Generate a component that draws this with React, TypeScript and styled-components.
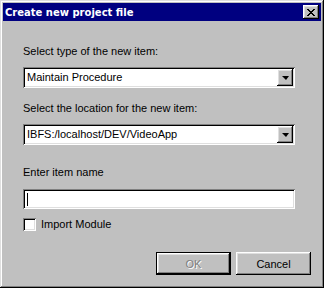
import styled, { createGlobalStyle } from "styled-components";

const GlobalStyle = createGlobalStyle`
  html, body {
    margin: 0;
    padding: 0;
    background: #c0c0c0;
  }
  body {
    font-family: "Liberation Sans", Arial, sans-serif;
    font-size: 11px;
  }
`;

const raised = `
  box-shadow: inset -1px -1px #000, inset 1px 1px #fff,
    inset -2px -2px #808080, inset 2px 2px #dfdfdf;
`;

const sunken = `
  box-shadow: inset 1px 1px #808080, inset -1px -1px #fff,
    inset 2px 2px #000, inset -2px -2px #dfdfdf;
`;

const Window = styled.div`
  box-sizing: border-box;
  width: 324px;
  height: 288px;
  padding: 3px;
  background: #c0c0c0;
  display: flex;
  flex-direction: column;
  box-shadow: inset -1px -1px #000, inset 1px 1px #dfdfdf,
    inset -2px -2px #808080, inset 2px 2px #fff;
`;

const TitleBar = styled.div`
  height: 18px;
  background: #000080;
  display: flex;
  align-items: center;
  justify-content: space-between;
  padding: 0 2px 0 2px;
`;

const Title = styled.span`
  color: #fff;
  font-weight: bold;
  font-size: 10px;
  font-family: "DejaVu Sans", Verdana, sans-serif;
`;

const CloseButton = styled.button`
  width: 16px;
  height: 14px;
  padding: 0;
  border: none;
  background: #c0c0c0;
  display: flex;
  align-items: center;
  justify-content: center;
  ${raised}
`;

const Body = styled.div`
  display: flex;
  flex-direction: column;
  padding: 24px 26px 0 20px;
  flex: 1;
`;

const Label = styled.div<{ $gap: number }>`
  line-height: 13px;
  height: 13px;
  color: #000;
  margin-top: ${({ $gap }) => $gap}px;
`;

const Combo = styled.div<{ $gap: number }>`
  box-sizing: border-box;
  height: 21px;
  margin-top: ${({ $gap }) => $gap}px;
  background: #fff;
  display: flex;
  align-items: center;
  padding: 2px;
  ${sunken}
`;

const ComboText = styled.span`
  flex: 1;
  padding-left: 2px;
  line-height: 13px;
`;

const ComboButton = styled.div`
  width: 16px;
  height: 17px;
  background: #c0c0c0;
  display: flex;
  align-items: center;
  justify-content: center;
  ${raised}
`;

const Arrow = styled.div`
  width: 0;
  height: 0;
  border-left: 4px solid transparent;
  border-right: 3px solid transparent;
  border-top: 4px solid #000;
  margin-top: 1px;
`;

const TextField = styled.div`
  box-sizing: border-box;
  height: 20px;
  margin-top: 10px;
  background: #fff;
  display: flex;
  align-items: center;
  padding: 3px 4px;
  ${sunken}
`;

const Caret = styled.div`
  width: 1px;
  height: 13px;
  background: #000;
`;

const CheckRow = styled.label`
  display: flex;
  align-items: center;
  margin-top: 9px;
  gap: 5px;
  line-height: 13px;
`;

const CheckBox = styled.span`
  box-sizing: border-box;
  width: 13px;
  height: 13px;
  background: #fff;
  ${sunken}
`;

const ButtonRow = styled.div`
  display: flex;
  justify-content: flex-end;
  gap: 5px;
  margin-top: 21px;
  margin-right: -16px;
`;

const Button = styled.button<{ $default?: boolean }>`
  box-sizing: border-box;
  width: 75px;
  height: 23px;
  padding: 0;
  border: none;
  background: #c0c0c0;
  font-family: "Liberation Sans", Arial, sans-serif;
  font-size: 11px;
  color: ${({ disabled }) => (disabled ? "#808080" : "#000")};
  text-shadow: ${({ disabled }) => (disabled ? "1px 1px #fff" : "none")};
  ${({ $default }) =>
    $default
      ? `box-shadow: inset 0 0 0 1px #000, inset -2px -2px #000, inset 2px 2px #fff,
    inset -3px -3px #808080, inset 3px 3px #dfdfdf;`
      : raised}
`;

export default function App() {
  return (
    <>
      <GlobalStyle />
      <Window>
        <TitleBar>
          <Title>Create new project file</Title>
          <CloseButton>
            <svg width="8" height="7" viewBox="0 0 8 7">
              <path d="M0 0h2v1h1v1h2V1h1V0h2v1H7v1H6v1H5v1h1v1h1v1h1v1H6V6H5V5H3v1H2v1H0V6h1V5h1V4h1V3H2V2H1V1H0z" fill="#000" />
            </svg>
          </CloseButton>
        </TitleBar>
        <Body>
          <Label $gap={0}>Select type of the new item:</Label>
          <Combo $gap={9}>
            <ComboText>Maintain Procedure</ComboText>
            <ComboButton>
              <Arrow />
            </ComboButton>
          </Combo>
          <Label $gap={14}>Select the location for the new item:</Label>
          <Combo $gap={9}>
            <ComboText>IBFS:/localhost/DEV/VideoApp</ComboText>
            <ComboButton>
              <Arrow />
            </ComboButton>
          </Combo>
          <Label $gap={21}>Enter item name</Label>
          <TextField>
            <Caret />
          </TextField>
          <CheckRow>
            <CheckBox />
            Import Module
          </CheckRow>
          <ButtonRow>
            <Button $default disabled>
              OK
            </Button>
            <Button>Cancel</Button>
          </ButtonRow>
        </Body>
      </Window>
    </>
  );
}
